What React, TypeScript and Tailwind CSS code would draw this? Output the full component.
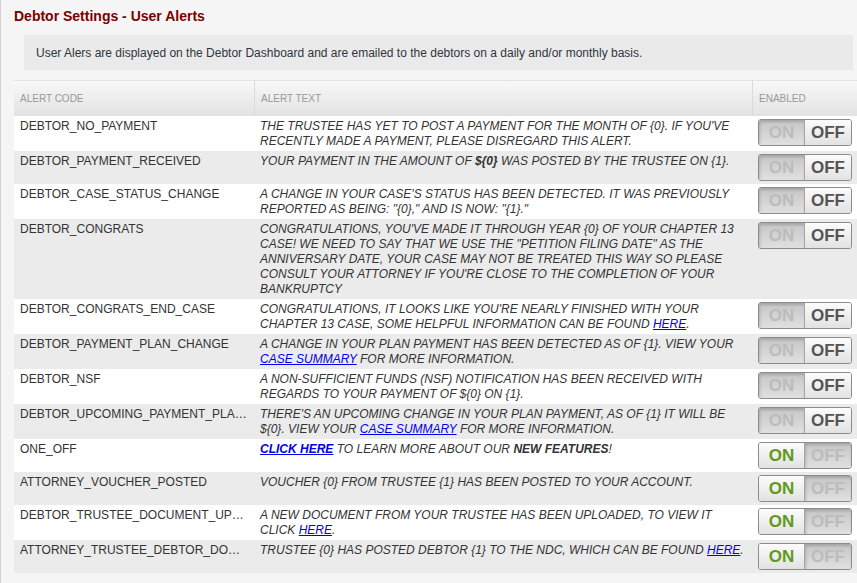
import type { ReactNode } from 'react';

interface AlertRow {
  code: string;
  text: ReactNode;
  enabled: boolean;
}

const Link = ({ children, bold }: { children: ReactNode; bold?: boolean }) => (
  <a href="#" className={`text-[#0000ee] underline ${bold ? 'font-bold' : ''}`}>
    {children}
  </a>
);

const rows: AlertRow[] = [
  {
    code: 'DEBTOR_NO_PAYMENT',
    text: "The trustee has yet to post a payment for the month of {0}. If you've recently made a payment, please disregard this alert.",
    enabled: false,
  },
  {
    code: 'DEBTOR_PAYMENT_RECEIVED',
    text: (
      <>
        Your payment in the amount of <b>${'{0}'}</b> was posted by the trustee on {'{1}'}.
      </>
    ),
    enabled: false,
  },
  {
    code: 'DEBTOR_CASE_STATUS_CHANGE',
    text: 'A change in your case\'s status has been detected. It was previously reported as being: "{0}," and is now: "{1}."',
    enabled: false,
  },
  {
    code: 'DEBTOR_CONGRATS',
    text: 'Congratulations, you\'ve made it through year {0} of your Chapter 13 case! We need to say that we use the "Petition Filing Date" as the anniversary date, your case may not be treated this way so please consult your attorney if you\'re close to the completion of your bankruptcy',
    enabled: false,
  },
  {
    code: 'DEBTOR_CONGRATS_END_CASE',
    text: (
      <>
        Congratulations, it looks like you're nearly finished with your Chapter 13 case, some helpful information can
        be found <Link>here</Link>.
      </>
    ),
    enabled: false,
  },
  {
    code: 'DEBTOR_PAYMENT_PLAN_CHANGE',
    text: (
      <>
        A change in your plan payment has been detected as of {'{1}'}. View your <Link>Case Summary</Link> for more
        information.
      </>
    ),
    enabled: false,
  },
  {
    code: 'DEBTOR_NSF',
    text: 'A non-sufficient funds (NSF) notification has been received with regards to your payment of ${0} on {1}.',
    enabled: false,
  },
  {
    code: 'DEBTOR_UPCOMING_PAYMENT_PLAN_CHANGE',
    text: (
      <>
        There's an upcoming change in your plan payment, as of {'{1}'} it will be ${'{0}'}. View your{' '}
        <Link>Case Summary</Link> for more information.
      </>
    ),
    enabled: false,
  },
  {
    code: 'ONE_OFF',
    text: (
      <>
        <Link bold>Click Here</Link> to learn more about our <b>new features</b>!
      </>
    ),
    enabled: true,
  },
  {
    code: 'ATTORNEY_VOUCHER_POSTED',
    text: 'Voucher {0} from trustee {1} has been posted to your account.',
    enabled: true,
  },
  {
    code: 'DEBTOR_TRUSTEE_DOCUMENT_UPLOADED',
    text: (
      <>
        A new document from your trustee has been uploaded, to view it click <Link>here</Link>.
      </>
    ),
    enabled: true,
  },
  {
    code: 'ATTORNEY_TRUSTEE_DEBTOR_DOCUMENT',
    text: (
      <>
        Trustee {'{0}'} has posted debtor {'{1}'} to the NDC, which can be found <Link>here</Link>.
      </>
    ),
    enabled: true,
  },
];

const Toggle = ({ on }: { on: boolean }) => (
  <div className="flex h-[27px] w-[94px] overflow-hidden rounded-[3px] border border-[#8c8c8c] text-[17px] font-bold leading-none">
    <span
      className={`flex w-[45px] items-center justify-center ${
        on
          ? 'bg-linear-to-b from-[#fcfcfc] to-[#e2e2e2] text-[#5e9b1a]'
          : 'bg-linear-to-b from-[#c6c6c6] to-[#e0e0e0] text-[#bcbcbc] shadow-[inset_1px_2px_3px_rgba(0,0,0,0.18)]'
      }`}
    >
      ON
    </span>
    <span
      className={`flex flex-1 items-center justify-center border-l border-[#a5a5a5] ${
        on
          ? 'bg-linear-to-b from-[#c6c6c6] to-[#e0e0e0] text-[#bcbcbc] shadow-[inset_1px_2px_3px_rgba(0,0,0,0.18)]'
          : 'bg-linear-to-b from-[#fcfcfc] to-[#e2e2e2] text-[#555]'
      }`}
    >
      OFF
    </span>
  </div>
);

export default function App() {
  return (
    <div className="min-h-[583px] overflow-hidden border-l border-[#d0d0d0] bg-[#f5f5f5] font-['Liberation_Sans',Arial,sans-serif] text-[#333]">
      <h1 className="pl-[13px] pt-[8px] text-[14px] font-bold leading-[16px] text-[#7b0000]">
        Debtor Settings - User Alerts
      </h1>

      <div className="ml-[23px] mr-[4px] mt-[11px] flex h-[35px] items-center bg-[#eaeaea] pl-[12px] text-[12px] text-[#2f3540]">
        User Alers are displayed on the Debtor Dashboard and are emailed to the debtors on a daily and/or monthly basis.
      </div>

      <div className="ml-[13px] mt-[10px] text-[12px]">
        <div className="grid h-[36px] grid-cols-[240px_498px_1fr] border-t border-[#e2e2e2] bg-linear-to-b from-[#f8f8f8] to-[#e2e2e2] text-[10px] uppercase text-[#999]">
          <div className="flex items-center px-[6px]">Alert Code</div>
          <div className="flex items-center border-l border-[#dadada] px-[6px]">Alert Text</div>
          <div className="flex items-center border-l border-[#dadada] px-[6px]">Enabled</div>
        </div>

        {rows.map((row, i) => (
          <div
            key={row.code}
            className={`grid grid-cols-[240px_498px_1fr] leading-[15px] ${i % 2 === 0 ? 'bg-white' : 'bg-[#ebebeb]'}`}
          >
            <div className="min-w-0 truncate px-[6px] pb-[2px] pt-[3px]">{row.code}</div>
            <div className="px-[6px] pb-[2px] pt-[3px] italic uppercase">{row.text}</div>
            <div className="px-[6px] py-[3px]">
              <Toggle on={row.enabled} />
            </div>
          </div>
        ))}
      </div>
    </div>
  );
}
